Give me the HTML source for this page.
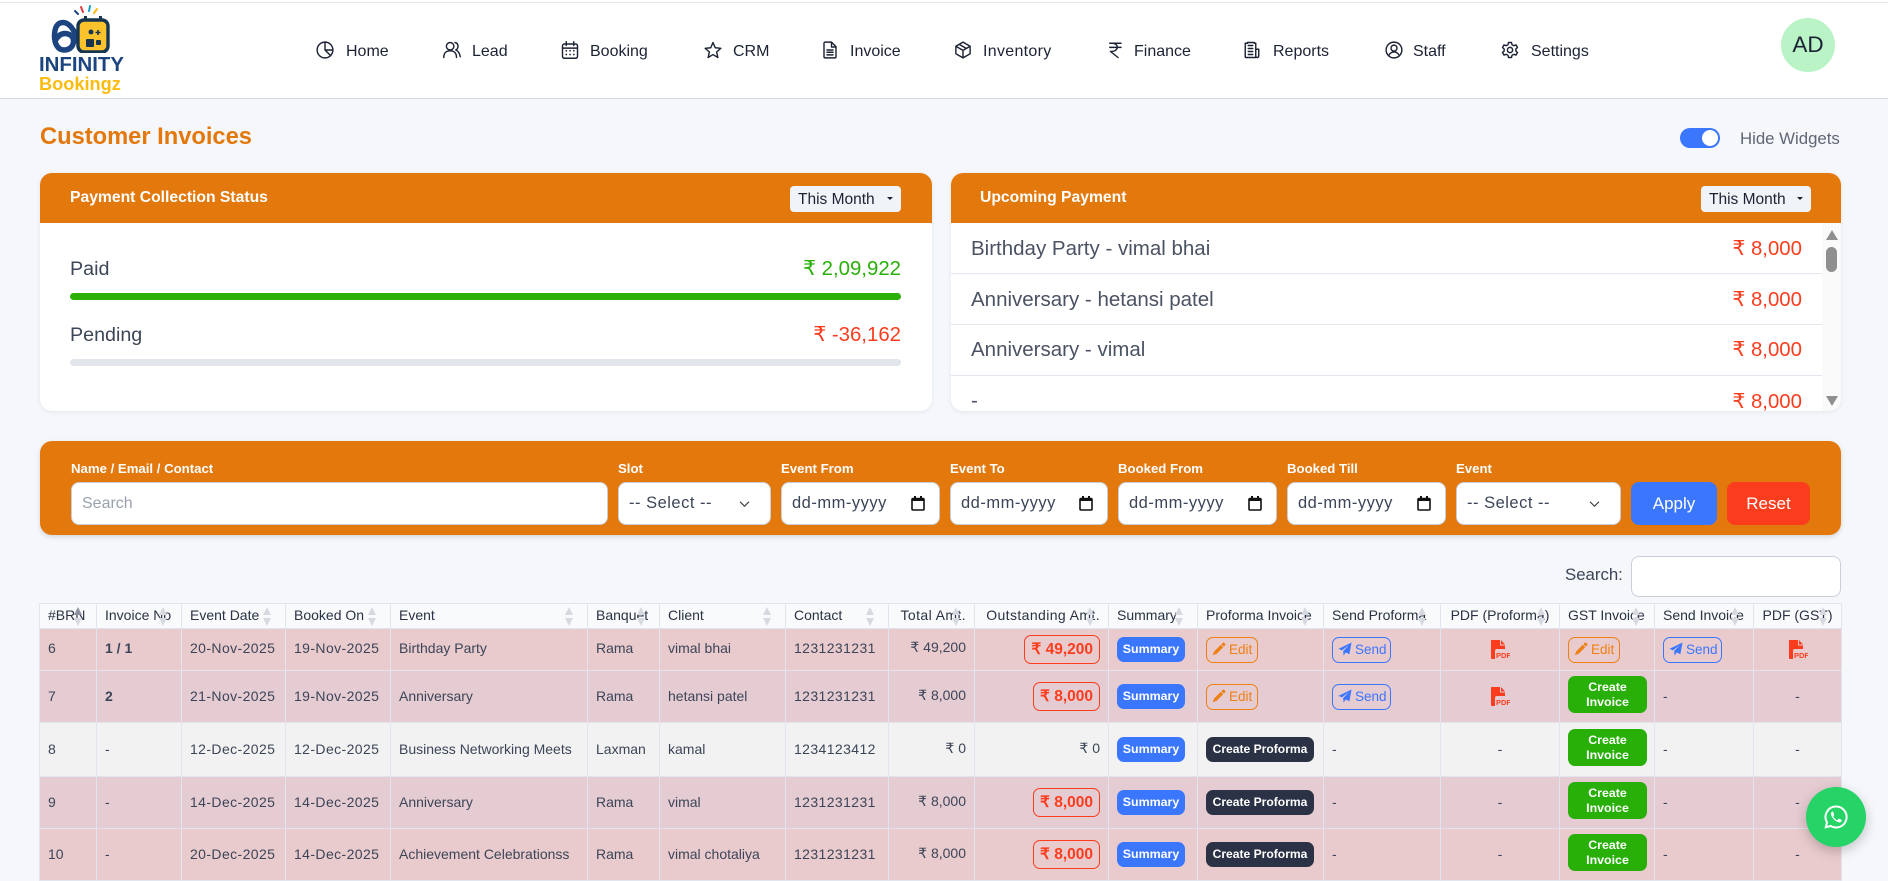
<!DOCTYPE html>
<html><head><meta charset="utf-8"><title>Customer Invoices</title>
<style>
*{box-sizing:border-box}
html,body{margin:0;padding:0;width:1888px;height:871px;overflow:hidden;background:#f5f7fb;font-family:"Liberation Sans",sans-serif;color:#3c4557}
.a{position:absolute}
.top{left:0;top:0;width:1888px;height:99px;background:#fff;border-top:0;border-bottom:1px solid #d3d8e3}
.topl{left:0;top:2px;width:1888px;height:1px;background:#e3e6ea}
.nl{position:absolute;top:43px;font-size:16px;line-height:18px;color:#1b2233;white-space:nowrap}
.ni{position:absolute;top:41px;width:18px;height:18px;fill:none;stroke:#1b2233;stroke-width:1.9;stroke-linecap:round;stroke-linejoin:round}
.card{background:#fff;border-radius:12px;box-shadow:0 1px 4px rgba(60,70,90,.1);overflow:hidden}
.hd{position:absolute;left:0;top:0;width:100%;height:50px;background:#e3780c}
.hd b{position:absolute;top:16px;font-size:15.7px;line-height:18px;color:#fff;font-weight:700;white-space:nowrap}
.mon{position:absolute;top:13px;height:26px;width:110px;background:#f0f3f7;border-radius:4px;color:#1b2233;font-size:15.5px;line-height:28px;padding-left:8px;font-weight:500;white-space:nowrap}
.mon i{position:absolute;right:8px;top:11px;border:3.500px solid transparent;border-top:3.500px solid #1b2233;border-bottom:0}
.lb{position:absolute;font-size:19.7px;line-height:22px;color:#3d4656;white-space:nowrap}
.up{font-size:20.5px}
.rt{position:absolute;font-size:20.4px;line-height:22px;white-space:nowrap;text-align:right}
.sep{position:absolute;height:1px;background:#e3e6ee}
.fl{position:absolute;top:461px;font-size:13.2px;line-height:16px;color:#fff;font-weight:700;white-space:nowrap}
.inp{position:absolute;top:482px;height:43px;background:#fff;border:1px solid #c8cfdb;border-radius:8px;font-size:16.5px;letter-spacing:.5px;line-height:41px;padding-left:10px;color:#3c4557;white-space:nowrap}
.cal{position:absolute;right:14px;top:13px;width:14px;height:15px;stroke:#111;fill:none}
.chev{position:absolute;right:20px;top:17px;width:11px;height:8px;stroke:#333;fill:none;stroke-width:1.3}
.btn{position:absolute;top:482px;height:43px;border-radius:8px;color:#fff;font-size:17px;line-height:43px;text-align:center;font-weight:500}
table{position:absolute;left:39px;top:603px;border-collapse:collapse;table-layout:fixed;width:1802px;font-size:14px;color:#3c4557}
th,td{border:1px solid #e2e5ee;padding:0 8px 2px;white-space:nowrap;overflow:visible;text-align:left;vertical-align:middle;position:relative}
th{height:25px;background:#f8fafc;font-weight:400;color:#2a3244;font-size:14px;padding:0 8px 2px}
th:after,th:before{content:"";position:absolute;right:14px;border:4px solid transparent}
th:before{top:3px;border-bottom:8px solid #d6dae0;border-top:0}
th:after{top:14px;border-top:8px solid #d6dae0;border-bottom:0}
th.s:before{border-bottom-color:#8c939e}
th.w{letter-spacing:.4px}
.r{text-align:right}.c{text-align:center}
.d{letter-spacing:.4px}
.r1 td{background:#e9cbce}.r2 td{background:#e5cbd2}.r3 td{background:#f2f2f2}
.f td{padding-bottom:4px}
.o,.bb,.pf,.cr,.ed,.sd,.pdf{position:relative;top:1px}
.f .o,.f .bb,.f .ed,.f .sd,.f .pdf{top:2px}
.o{display:inline-block;border:1px solid #fb3d1e;border-radius:7px;color:#fb3d1e;font-size:15.5px;font-weight:600;height:29px;line-height:27px;padding:0 6px;vertical-align:middle}
.bb{display:inline-block;background:#3b76ff;color:#fff;font-weight:700;font-size:12.4px;border-radius:7px;height:25px;line-height:25px;width:68px;text-align:center;vertical-align:middle}
.pf{display:inline-block;background:#2b3245;color:#fff;font-weight:700;font-size:12.1px;border-radius:7px;height:25px;line-height:25px;width:108px;text-align:center;vertical-align:middle}
.cr{display:block;background:#28b008;color:#fff;font-weight:700;font-size:12.4px;border-radius:7px;height:37px;line-height:15px;width:79px;padding-top:4px;text-align:center;margin-top:-5px}
.ed,.sd{display:inline-block;border:1px solid #ee7f12;color:#ee7f12;border-radius:7px;height:26px;line-height:24px;font-size:13.5px;font-weight:500;vertical-align:middle;padding-left:5px;white-space:nowrap}
.ed{width:52px}
.sd{width:59px;border-color:#3b76ff;color:#3b76ff}
.ed svg,.sd svg{width:14px;height:14px;vertical-align:-2px;margin-right:3px}
.pdf{display:inline-block;width:20px;height:20px;vertical-align:middle}
</style></head><body>
<div class="a top"></div><div class="a topl"></div>
<svg class="a" style="left:48px;top:5px" width="64" height="48" viewBox="0 0 64 48">
<g stroke-width="2" stroke-linecap="round"><path d="M30 9l-3-3" stroke="#1c4480"/><path d="M35 7l-2-5" stroke="#e03a3e"/><path d="M41 6l1-5" stroke="#1aa0c8"/><path d="M46 8l3-4" stroke="#fcbc0f"/></g>
<path d="M31 38C27 26 22 17.500 15 17.500 9 17.500 6.500 23 6.500 31 6.500 39 10 45 16 45 22 45 25.500 41 25.500 36 25.500 31 21 28.500 17 28.500 12 28.500 9 32 7 36" fill="none" stroke="#1c4480" stroke-width="5.500"/>
<rect x="30" y="15" width="30" height="32" rx="6" fill="#fcc32c" stroke="#17354f" stroke-width="3.400"/>
<rect x="36" y="11" width="3" height="5" fill="#17354f"/><rect x="51" y="11" width="3" height="5" fill="#17354f"/>
<rect x="38" y="34" width="8" height="8" rx="1" fill="#17354f"/><rect x="48" y="35" width="5" height="5" rx="1" fill="#17354f"/><circle cx="43" cy="27" r="2.500" fill="#17354f"/><path d="M50 25v5M47.500 27.500h5" stroke="#17354f" stroke-width="1.600"/>
</svg>
<div class="a" style="left:39px;top:55px;font-size:20.400px;line-height:21px;font-weight:700;color:#1c4480;white-space:nowrap">INFINITY</div>
<div class="a" style="left:39px;top:74px;font-size:18.200px;line-height:20px;font-weight:700;color:#fcbc0f;white-space:nowrap">Bookingz</div>

<svg class="ni" style="left:316px" viewBox="0 0 24 24"><circle cx="12" cy="12" r="10.500"/><path d="M12 1.500V12l7.500 7.500M12 12h10.500"/></svg><span class="nl" style="left:346px">Home</span>
<svg class="ni" style="left:443px" viewBox="0 0 24 24"><circle cx="9.500" cy="7" r="5"/><path d="M1 22c0-6 3.500-9 8.500-9s8.500 3 8.500 9M16 2c3 .5 4 3 4 5s-1 4-3 5c3 1 5 4 6 9"/></svg><span class="nl" style="left:472px">Lead</span>
<svg class="ni" style="left:561px" viewBox="0 0 24 24"><rect x="2" y="4" width="20" height="19" rx="2.500"/><path d="M2 9.500h20M7 1v5M17 1v5"/><path d="M7 13h.1M12 13h.1M17 13h.1M7 18h.1M12 18h.1M17 18h.1" stroke-width="2.200"/></svg><span class="nl" style="left:590px">Booking</span>
<svg class="ni" style="left:704px" viewBox="0 0 24 24"><path d="M12 2l3 7 7.500.7-5.700 5 1.700 7.300-6.500-3.900L5.500 22l1.700-7.300-5.700-5L9 9z"/></svg><span class="nl" style="left:733px">CRM</span>
<svg class="ni" style="left:821px" viewBox="0 0 24 24"><path d="M5 1.500h9l6 6V21a1.500 1.500 0 0 1-1.500 1.500h-13A1.500 1.500 0 0 1 4 21V3a1.500 1.500 0 0 1 1-1.500zM14 1.500V8h6M8 12h8M8 15h8M8 18.500h8"/></svg><span class="nl" style="left:850px">Invoice</span>
<svg class="ni" style="left:954px" viewBox="0 0 24 24"><path d="M12 1.500l9.500 5.500v10L12 22.500 2.500 17V7zM2.500 7l9.500 5.500L21.500 7M12 12.500v10M7 4.500l9.500 5.500"/></svg><span class="nl" style="left:983px;letter-spacing:.3px">Inventory</span>
<svg class="ni" style="left:1106px" viewBox="0 0 24 24"><path d="M5 3h15M5 8.500h15M8 3c5 0 7 2.500 7 5.500S12 14 6 14l10 8"/></svg><span class="nl" style="left:1134px">Finance</span>
<svg class="ni" style="left:1243px" viewBox="0 0 24 24"><path d="M3 3h3v-1h9v1h2v19H4a1 1 0 0 1-1-1zM17 11h4v9a2 2 0 0 1-4 0M7 10h6M7 14h6M7 18h6M7 6h6"/></svg><span class="nl" style="left:1273px">Reports</span>
<svg class="ni" style="left:1385px" viewBox="0 0 24 24"><circle cx="12" cy="12" r="10.500"/><circle cx="12" cy="9.500" r="4"/><path d="M5 19.500c1-3 4-5 7-5s6 2 7 5"/></svg><span class="nl" style="left:1413px">Staff</span>
<svg class="ni" style="left:1501px" viewBox="0 0 24 24"><circle cx="12" cy="12" r="3.500"/><path d="M10 2h4l.7 3 2.400 1.200 2.900-1 2 3.400-2.200 2.100v2.600l2.200 2.100-2 3.400-2.900-1L14.700 19 14 22h-4l-.7-3-2.400-1.200-2.900 1-2-3.400 2.200-2.100v-2.600L2 8.600l2-3.400 2.900 1L9.300 5z"/></svg><span class="nl" style="left:1531px">Settings</span>
<div class="a" style="left:1781px;top:18px;width:54px;height:54px;border-radius:50%;background:#b9f3c6;color:#1b2233;font-size:22.500px;line-height:54px;text-align:center">AD</div>

<div class="a" style="left:40px;top:122px;font-size:23.700px;line-height:30px;font-weight:700;color:#e3780c;white-space:nowrap">Customer Invoices</div>
<div class="a" style="left:1680px;top:128px;width:40px;height:20px;border-radius:10px;background:#3b76ff"></div>
<div class="a" style="left:1702px;top:130px;width:16px;height:16px;border-radius:50%;background:#fff"></div>
<div class="a" style="left:1740px;top:130px;font-size:16.800px;line-height:18px;color:#5f6776;white-space:nowrap">Hide Widgets</div>

<div class="a card" style="left:40px;top:173px;width:892px;height:238px">
<div class="hd"><b style="left:30px">Payment Collection Status</b><div class="mon" style="left:750px;width:111px">This Month<i></i></div></div>
<div class="lb" style="left:30px;top:85px">Paid</div><div class="rt" style="right:31px;top:85px;color:#28b008">₹ 2,09,922</div>
<div class="a" style="left:30px;top:120px;width:831px;height:7px;border-radius:4px;background:#2cb007"></div>
<div class="lb" style="left:30px;top:151px">Pending</div><div class="rt" style="right:31px;top:151px;color:#fb3d1e">₹ -36,162</div>
<div class="a" style="left:30px;top:186px;width:831px;height:7px;border-radius:4px;background:#e2e6ec"></div>
</div>

<div class="a card" style="left:951px;top:173px;width:890px;height:238px">
<div class="hd"><b style="left:29px">Upcoming Payment</b><div class="mon" style="left:750px">This Month<i></i></div></div>
<div class="lb up" style="left:20px;top:65px;color:#4a5263">Birthday Party - vimal bhai</div><div class="rt" style="right:39px;top:65px;color:#fb3d1e">₹ 8,000</div>
<div class="sep" style="left:0;top:100px;width:871px"></div>
<div class="lb up" style="left:20px;top:116px;color:#4a5263">Anniversary - hetansi patel</div><div class="rt" style="right:39px;top:116px;color:#fb3d1e">₹ 8,000</div>
<div class="sep" style="left:0;top:151px;width:871px"></div>
<div class="lb up" style="left:20px;top:166px;color:#4a5263">Anniversary - vimal</div><div class="rt" style="right:39px;top:166px;color:#fb3d1e">₹ 8,000</div>
<div class="sep" style="left:0;top:202px;width:871px"></div>
<div class="lb up" style="left:20px;top:217px;color:#4a5263">-</div><div class="rt" style="right:39px;top:218px;color:#fb3d1e">₹ 8,000</div>
<div class="a" style="left:871px;top:50px;width:19px;height:188px;background:#fafafa"></div>
<div class="a" style="left:875px;top:57px;width:0;height:0;border:6px solid transparent;border-bottom:10px solid #8f8f8f;border-top:0"></div>
<div class="a" style="left:875px;top:74px;width:11px;height:25px;border-radius:6px;background:#8f8f8f"></div>
<div class="a" style="left:875px;top:223px;width:0;height:0;border:6px solid transparent;border-top:10px solid #8f8f8f;border-bottom:0"></div>
</div>

<div class="a" style="left:40px;top:441px;width:1801px;height:94px;border-radius:12px;background:#e3780c;box-shadow:0 2px 5px rgba(60,70,90,.18)"></div>
<span class="fl" style="left:71px">Name / Email / Contact</span><span class="fl" style="left:618px">Slot</span><span class="fl" style="left:781px">Event From</span><span class="fl" style="left:950px">Event To</span><span class="fl" style="left:1118px">Booked From</span><span class="fl" style="left:1287px">Booked Till</span><span class="fl" style="left:1456px">Event</span>
<div class="inp" style="left:71px;width:537px;color:#9aa1ae;font-size:16px;letter-spacing:0">Search</div>
<div class="inp" style="left:618px;width:153px">-- Select --<svg class="chev" viewBox="0 0 12 9"><path d="M1 2l5 5 5-5"/></svg></div>
<div class="inp" style="left:781px;width:159px">dd-mm-yyyy<svg class="cal" viewBox="0 0 14 15"><rect x="1" y="2.500" width="12" height="11.500" rx="1" stroke-width="1.600"/><path d="M1 4h12M4 0v3M10 0v3" stroke-width="2"/></svg></div>
<div class="inp" style="left:950px;width:158px">dd-mm-yyyy<svg class="cal" viewBox="0 0 14 15"><rect x="1" y="2.500" width="12" height="11.500" rx="1" stroke-width="1.600"/><path d="M1 4h12M4 0v3M10 0v3" stroke-width="2"/></svg></div>
<div class="inp" style="left:1118px;width:159px">dd-mm-yyyy<svg class="cal" viewBox="0 0 14 15"><rect x="1" y="2.500" width="12" height="11.500" rx="1" stroke-width="1.600"/><path d="M1 4h12M4 0v3M10 0v3" stroke-width="2"/></svg></div>
<div class="inp" style="left:1287px;width:159px">dd-mm-yyyy<svg class="cal" viewBox="0 0 14 15"><rect x="1" y="2.500" width="12" height="11.500" rx="1" stroke-width="1.600"/><path d="M1 4h12M4 0v3M10 0v3" stroke-width="2"/></svg></div>
<div class="inp" style="left:1456px;width:165px">-- Select --<svg class="chev" viewBox="0 0 12 9"><path d="M1 2l5 5 5-5"/></svg></div>
<div class="btn" style="left:1631px;width:86px;background:#3b76ff">Apply</div>
<div class="btn" style="left:1727px;width:83px;background:#fb3d1e">Reset</div>

<div class="a" style="left:1565px;top:565px;font-size:16.800px;line-height:20px;color:#3c4557">Search:</div>
<div class="a" style="left:1631px;top:556px;width:210px;height:41px;background:#fff;border:1px solid #c8cfdb;border-radius:8px"></div>

<svg width="0" height="0" style="position:absolute"><defs>
<symbol id="pen" viewBox="0 0 16 16"><path fill="#ee7f12" d="M12.100 1.100a1.500 1.500 0 0 1 2.100 0l.7.7a1.500 1.500 0 0 1 0 2.100L13.500 5.300 10.700 2.500zM10 3.200L12.800 6 5.200 13.600 1 15l1.400-4.200z"/></symbol>
<symbol id="snd" viewBox="0 0 16 16"><path fill="#3b76ff" d="M15.500.5L13 14 8.700 11.800 6.500 15.500 5.800 10.500 12.500 3.500 4.500 9.600 .5 7.800z"/></symbol>
<symbol id="pd" viewBox="0 0 20 20"><path fill="#fb3d1e" d="M1 0h9v5.500h5V9H7a2 2 0 0 0-2 2v8H2a1 1 0 0 1-1-1z M11 0l4 4.500h-4z"/><text x="6" y="18" font-family="Liberation Sans" font-size="7.500" font-weight="700" fill="#fb3d1e">PDF</text></symbol>
</defs></svg>

<table>
<colgroup><col style="width:57px"><col style="width:85px"><col style="width:104px"><col style="width:105px"><col style="width:197px"><col style="width:72px"><col style="width:126px"><col style="width:103px"><col style="width:86px"><col style="width:134px"><col style="width:89px"><col style="width:126px"><col style="width:117px"><col style="width:119px"><col style="width:95px"><col style="width:99px"><col style="width:88px"></colgroup>
<tr><th class="s">#BRN</th><th>Invoice No</th><th>Event Date</th><th>Booked On</th><th>Event</th><th>Banquet</th><th>Client</th><th>Contact</th><th class="r w">Total Amt.</th><th class="r w">Outstanding Amt.</th><th>Summary</th><th>Proforma Invoice</th><th>Send Proforma</th><th class="c">PDF (Proforma)</th><th>GST Invoice</th><th>Send Invoice</th><th class="c">PDF (GST)</th></tr>
<tr class="r1 f" style="height:42px"><td>6</td><td><b>1 / 1</b></td><td class="d">20-Nov-2025</td><td class="d">19-Nov-2025</td><td>Birthday Party</td><td>Rama</td><td>vimal bhai</td><td class="d">1231231231</td><td class="r">₹ 49,200</td><td class="r"><span class="o">₹ 49,200</span></td><td><span class="bb">Summary</span></td><td><span class="ed"><svg><use href="#pen"/></svg>Edit</span></td><td><span class="sd"><svg><use href="#snd"/></svg>Send</span></td><td class="c"><svg class="pdf"><use href="#pd"/></svg></td><td><span class="ed"><svg><use href="#pen"/></svg>Edit</span></td><td><span class="sd"><svg><use href="#snd"/></svg>Send</span></td><td class="c"><svg class="pdf"><use href="#pd"/></svg></td></tr>
<tr class="r2" style="height:52px"><td>7</td><td><b>2</b></td><td class="d">21-Nov-2025</td><td class="d">19-Nov-2025</td><td>Anniversary</td><td>Rama</td><td>hetansi patel</td><td class="d">1231231231</td><td class="r">₹ 8,000</td><td class="r"><span class="o">₹ 8,000</span></td><td><span class="bb">Summary</span></td><td><span class="ed"><svg><use href="#pen"/></svg>Edit</span></td><td><span class="sd"><svg><use href="#snd"/></svg>Send</span></td><td class="c"><svg class="pdf"><use href="#pd"/></svg></td><td><span class="cr">Create<br>Invoice</span></td><td>-</td><td class="c">-</td></tr>
<tr class="r3" style="height:54px"><td>8</td><td>-</td><td class="d">12-Dec-2025</td><td class="d">12-Dec-2025</td><td>Business Networking Meets</td><td>Laxman</td><td>kamal</td><td class="d">1234123412</td><td class="r">₹ 0</td><td class="r">₹ 0</td><td><span class="bb">Summary</span></td><td><span class="pf">Create Proforma</span></td><td>-</td><td class="c">-</td><td><span class="cr">Create<br>Invoice</span></td><td>-</td><td class="c">-</td></tr>
<tr class="r2" style="height:52px"><td>9</td><td>-</td><td class="d">14-Dec-2025</td><td class="d">14-Dec-2025</td><td>Anniversary</td><td>Rama</td><td>vimal</td><td class="d">1231231231</td><td class="r">₹ 8,000</td><td class="r"><span class="o">₹ 8,000</span></td><td><span class="bb">Summary</span></td><td><span class="pf">Create Proforma</span></td><td>-</td><td class="c">-</td><td><span class="cr">Create<br>Invoice</span></td><td>-</td><td class="c">-</td></tr>
<tr class="r1" style="height:52px"><td>10</td><td>-</td><td class="d">20-Dec-2025</td><td class="d">14-Dec-2025</td><td>Achievement Celebrationss</td><td>Rama</td><td>vimal chotaliya</td><td class="d">1231231231</td><td class="r">₹ 8,000</td><td class="r"><span class="o">₹ 8,000</span></td><td><span class="bb">Summary</span></td><td><span class="pf">Create Proforma</span></td><td>-</td><td class="c">-</td><td><span class="cr">Create<br>Invoice</span></td><td>-</td><td class="c">-</td></tr>
</table>

<div class="a" style="left:1806px;top:787px;width:60px;height:60px;border-radius:50%;background:#25d366;box-shadow:0 4px 12px rgba(0,0,0,.22)"></div>
<svg class="a" style="left:1824px;top:805px" width="24" height="24" viewBox="0 0 24 24"><path fill="none" stroke="#fff" stroke-width="2" d="M12 1.500A10.500 10.500 0 0 0 3 17.400L1.800 22.200 6.700 21A10.500 10.500 0 1 0 12 1.500z"/><path fill="#fff" d="M8.500 6.500c-.6 0-1.500.8-1.500 2.300 0 3 3.900 7.900 8 8.600 1.500.2 2.700-.9 2.700-2 0-.4-.1-.6-.3-.7l-2.200-1c-.3-.1-.5-.1-.7.2l-.8 1c-.2.200-.4.200-.7.100-1.500-.6-2.900-1.900-3.600-3.300-.1-.3-.1-.5.100-.7l.6-.8c.2-.2.200-.4.100-.6l-.9-2.300c-.2-.5-.4-.8-.8-.8z"/></svg>
</body></html>
